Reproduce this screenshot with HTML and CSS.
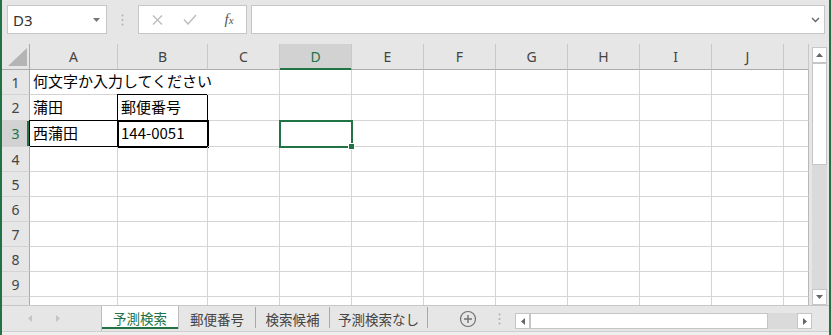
FILE: index.html
```html
<!DOCTYPE html>
<html>
<head>
    <meta charset="utf-8">
    <title>Book1 - Excel</title>
    <link rel="stylesheet" href="styles.css">
</head>
<body>
<div class="window">
    <!-- name box + formula bar -->
    <div class="formula-bar">
        <div class="name-box">
            <span>D3</span>
            <svg width="7" height="4"><path d="M0 0h7L3.5 4z" fill="#777"/></svg>
        </div>
        <div class="grip">
            <svg width="3" height="12"><circle cx="1.5" cy="1.5" r="1" fill="#b0b0b0"/><circle cx="1.5" cy="6" r="1" fill="#b0b0b0"/><circle cx="1.5" cy="10.5" r="1" fill="#b0b0b0"/></svg>
        </div>
        <div class="fx-buttons">
            <span class="btn"><svg width="11" height="10"><path d="M1 0.5l9 9M10 0.5l-9 9" stroke="#bcbcbc" stroke-width="1.3" fill="none"/></svg></span>
            <span class="btn"><svg width="14" height="11"><path d="M1 5.5l4 4.5 8-9" stroke="#bcbcbc" stroke-width="1.4" fill="none"/></svg></span>
            <span class="btn fx"><i>f<small>x</small></i></span>
        </div>
        <div class="formula-input">
            <svg width="9" height="6"><path d="M1 1l3.5 3.5L8 1" stroke="#666" stroke-width="1.4" fill="none"/></svg>
        </div>
    </div>

    <div class="sheet-area">
        <div class="sheet">
            <div class="corner"><svg width="19" height="18"><polygon points="19,0 19,18 0,18" fill="#b4b4b4"/></svg></div>
            <div class="col-head">A</div>
            <div class="col-head">B</div>
            <div class="col-head">C</div>
            <div class="col-head sel">D</div>
            <div class="col-head">E</div>
            <div class="col-head">F</div>
            <div class="col-head">G</div>
            <div class="col-head">H</div>
            <div class="col-head">I</div>
            <div class="col-head">J</div>
            <div class="col-head k"></div>

            <div class="row-head">1</div>
            <div class="cell wide">何文字か入力してください</div>
            <div class="cell"></div><div class="cell"></div><div class="cell"></div><div class="cell"></div><div class="cell"></div><div class="cell"></div><div class="cell"></div><div class="cell k"></div>

            <div class="row-head">2</div>
            <div class="cell">蒲田</div>
            <div class="cell boxed">郵便番号</div>
            <div class="cell"></div><div class="cell"></div><div class="cell"></div><div class="cell"></div><div class="cell"></div><div class="cell"></div><div class="cell"></div><div class="cell"></div><div class="cell k"></div>

            <div class="row-head sel">3</div>
            <div class="cell boxed">西蒲田</div>
            <div class="cell thick">144-0051</div>
            <div class="cell"></div>
            <div class="cell active"><span class="handle"></span></div>
            <div class="cell"></div><div class="cell"></div><div class="cell"></div><div class="cell"></div><div class="cell"></div><div class="cell"></div><div class="cell k"></div>

            <div class="row-head">4</div>
            <div class="cell"></div><div class="cell"></div><div class="cell"></div><div class="cell"></div><div class="cell"></div><div class="cell"></div><div class="cell"></div><div class="cell"></div><div class="cell"></div><div class="cell"></div><div class="cell k"></div>
            <div class="row-head">5</div>
            <div class="cell"></div><div class="cell"></div><div class="cell"></div><div class="cell"></div><div class="cell"></div><div class="cell"></div><div class="cell"></div><div class="cell"></div><div class="cell"></div><div class="cell"></div><div class="cell k"></div>
            <div class="row-head">6</div>
            <div class="cell"></div><div class="cell"></div><div class="cell"></div><div class="cell"></div><div class="cell"></div><div class="cell"></div><div class="cell"></div><div class="cell"></div><div class="cell"></div><div class="cell"></div><div class="cell k"></div>
            <div class="row-head">7</div>
            <div class="cell"></div><div class="cell"></div><div class="cell"></div><div class="cell"></div><div class="cell"></div><div class="cell"></div><div class="cell"></div><div class="cell"></div><div class="cell"></div><div class="cell"></div><div class="cell k"></div>
            <div class="row-head">8</div>
            <div class="cell"></div><div class="cell"></div><div class="cell"></div><div class="cell"></div><div class="cell"></div><div class="cell"></div><div class="cell"></div><div class="cell"></div><div class="cell"></div><div class="cell"></div><div class="cell k"></div>
            <div class="row-head">9</div>
            <div class="cell"></div><div class="cell"></div><div class="cell"></div><div class="cell"></div><div class="cell"></div><div class="cell"></div><div class="cell"></div><div class="cell"></div><div class="cell"></div><div class="cell"></div><div class="cell k"></div>
            <div class="row-head">10</div>
            <div class="cell"></div><div class="cell"></div><div class="cell"></div><div class="cell"></div><div class="cell"></div><div class="cell"></div><div class="cell"></div><div class="cell"></div><div class="cell"></div><div class="cell"></div><div class="cell k"></div>
        </div>

        <div class="vscroll">
            <div class="sb-btn"><svg width="7" height="4"><path d="M0 4h7L3.5 0z" fill="#666"/></svg></div>
            <div class="sb-track">
                <div class="sb-thumb"></div>
            </div>
            <div class="sb-btn"><svg width="7" height="4"><path d="M0 0h7L3.5 4z" fill="#666"/></svg></div>
        </div>
    </div>

    <!-- sheet tabs -->
    <div class="tab-bar">
        <div class="nav">
            <svg class="nav-l" width="4" height="7"><path d="M4 0v7L0 3.5z" fill="#c4c4c4"/></svg>
            <svg class="nav-r" width="4" height="7"><path d="M0 0v7L4 3.5z" fill="#c4c4c4"/></svg>
        </div>
        <div class="tab active t1">予測検索</div>
        <div class="tab t2">郵便番号</div>
        <div class="sep"></div>
        <div class="tab t3">検索候補</div>
        <div class="sep"></div>
        <div class="tab t4">予測検索なし</div>
        <div class="sep"></div>
        <div class="add-sheet">
            <svg width="18" height="18"><circle cx="9" cy="9" r="7.5" stroke="#707070" stroke-width="1.2" fill="none"/><path d="M9 5v8M5 9h8" stroke="#707070" stroke-width="1.4"/></svg>
        </div>
        <div class="dots">
            <svg width="3" height="12"><circle cx="1.5" cy="1.5" r="1" fill="#b0b0b0"/><circle cx="1.5" cy="6" r="1" fill="#b0b0b0"/><circle cx="1.5" cy="10.5" r="1" fill="#b0b0b0"/></svg>
        </div>
        <div class="hscroll">
            <div class="sb-btn"><svg width="4" height="7"><path d="M4 0v7L0 3.5z" fill="#666"/></svg></div>
            <div class="h-thumb"></div>
            <div class="h-track"></div>
            <div class="sb-btn"><svg width="4" height="7"><path d="M0 0v7L4 3.5z" fill="#666"/></svg></div>
        </div>
    </div>
    <div class="status-strip"></div>
</div>
</body>
</html>
```

FILE: styles.css
```css
* {
    box-sizing: border-box;
}
body {
    margin: 0;
}

.window {
    width: 831px;
    height: 335px;
    background: #e6e6e6;
    border-left: 2px solid #217346;
    border-right: 2px solid #217346;
    overflow: hidden;
    display: flex;
    flex-direction: column;
    font-family: "Noto Sans", sans-serif;
}

/* formula bar */
.formula-bar {
    height: 44px;
    flex: none;
    display: flex;
    align-items: flex-start;
    padding: 5px 4px 0 5px;
}
.name-box {
    width: 100px;
    height: 29px;
    background: #fff;
    border: 1px solid #c6c6c6;
    display: flex;
    align-items: center;
    justify-content: space-between;
    padding: 0 6px 0 5px;
    font-size: 15px;
    color: #333;
}
.grip {
    width: 31px;
    height: 29px;
    display: flex;
    align-items: center;
    justify-content: center;
}
.fx-buttons {
    width: 109px;
    height: 29px;
    background: #fff;
    border: 1px solid #c6c6c6;
    display: flex;
    align-items: center;
    margin-right: 4px;
}
.btn {
    width: 30px;
    margin-left: 3px;
    display: flex;
    justify-content: center;
}
.btn.fx {
    margin-left: 9px;
    font-family: "Liberation Serif", serif;
    font-size: 15px;
    color: #555;
}
.btn.fx small {
    font-size: 11px;
}
.formula-input {
    flex: 1;
    height: 29px;
    background: #fff;
    border: 1px solid #c6c6c6;
    display: flex;
    align-items: center;
    justify-content: flex-end;
    padding-right: 4px;
}

/* grid */
.sheet-area {
    height: 261px;
    flex: none;
    display: flex;
}
.sheet {
    width: 807px;
    height: 261px;
    display: grid;
    grid-template-columns: 28px 88px 90px repeat(8, 72px) 25px;
    grid-template-rows: 26px 25px 26px 26px repeat(7, 25px);
    overflow: hidden;
    background: #fff;
}
.sheet > div {
    border-right: 1px solid #d4d4d4;
    border-bottom: 1px solid #d4d4d4;
}
.sheet > .k {
    border-right-color: #b8b8b8;
}
.sheet > .corner {
    background: #e6e6e6;
    border-right-color: #ababab;
    border-bottom-color: #ababab;
    display: flex;
    align-items: flex-end;
    justify-content: flex-end;
    padding: 0 2px 3px 0;
}
.sheet > .col-head {
    background: #e6e6e6;
    border-right-color: #c8c8c8;
    border-bottom-color: #ababab;
    display: flex;
    align-items: center;
    justify-content: center;
    font-size: 14px;
    color: #444;
}
.sheet > .col-head.sel {
    background: #d2d2d2;
    color: #217346;
    border-bottom-color: #217346;
    box-shadow: inset 0 -1px #217346;
}
.sheet > .row-head {
    background: #e6e6e6;
    border-right-color: #ababab;
    display: flex;
    align-items: center;
    justify-content: center;
    font-size: 14px;
    color: #444;
}
.sheet > .row-head.sel {
    background: #d2d2d2;
    color: #217346;
    box-shadow: inset -2px 0 #217346;
}
.cell {
    display: flex;
    align-items: center;
    padding: 0 0 3px 3px;
    font-family: "Noto Sans CJK JP", sans-serif;
    font-size: 15px;
    color: #000;
    white-space: nowrap;
}
.cell.wide {
    grid-column: span 3;
}
.sheet > .cell.boxed {
    border-right-color: #000;
    border-bottom-color: #000;
    box-shadow: -1px -1px 0 #000;
}
.cell.thick {
    outline: 2px solid #000;
    outline-offset: -1px;
}
.cell.active {
    position: relative;
    outline: 2px solid #217346;
    outline-offset: -1px;
}
.handle {
    position: absolute;
    right: -4px;
    bottom: -4px;
    width: 7px;
    height: 7px;
    background: #217346;
    border: 1px solid #fff;
}

/* scrollbars */
.vscroll {
    width: 20px;
    display: flex;
    flex-direction: column;
    padding: 3px 2px 0 3px;
}
.sb-btn {
    height: 16px;
    width: 15px;
    flex: none;
    background: #fff;
    border: 1px solid #c6c6c6;
    display: flex;
    align-items: center;
    justify-content: center;
}
.sb-track {
    flex: 1;
    background: #dadada;
}
.sb-thumb {
    height: 102px;
    background: #fff;
    border: 1px solid #c6c6c6;
}

/* tabs */
.tab-bar {
    height: 26px;
    flex: none;
    display: flex;
    align-items: stretch;
    border-top: 1px solid #c6c6c6;
}
.nav {
    width: 100px;
    border-right: 1px solid #bdbdbd;
    display: flex;
    align-items: center;
    padding-left: 26px;
}
.nav-r {
    margin-left: 24px;
}
.tab {
    display: flex;
    align-items: center;
    justify-content: center;
    font-family: "Noto Sans CJK JP", sans-serif;
    font-size: 13.5px;
    color: #444;
}
.tab.active {
    height: 23px;
    background: #fff;
    color: #217346;
    border-right: 1px solid #bdbdbd;
    box-shadow: inset 0 -2px #217346;
}
.t1 { width: 77px; }
.t2 { width: 76px; }
.t3 { width: 73px; }
.t4 { width: 97px; }
.sep {
    width: 1px;
    height: 21px;
    margin-top: 1px;
    background: #a8a8a8;
}
.add-sheet {
    margin-left: 31px;
    display: flex;
    align-items: center;
}
.dots {
    margin-left: 21px;
    display: flex;
    align-items: center;
}
.hscroll {
    width: 297px;
    height: 16px;
    margin: 7px 0 0 14px;
    display: flex;
}
.h-thumb {
    width: 238px;
    background: #fff;
    border: 1px solid #c6c6c6;
}
.h-track {
    flex: 1;
    background: #dadada;
}
.status-strip {
    flex: 1;
    background: #eeeeee;
    border-top: 1px solid #cfcfcf;
}
```
